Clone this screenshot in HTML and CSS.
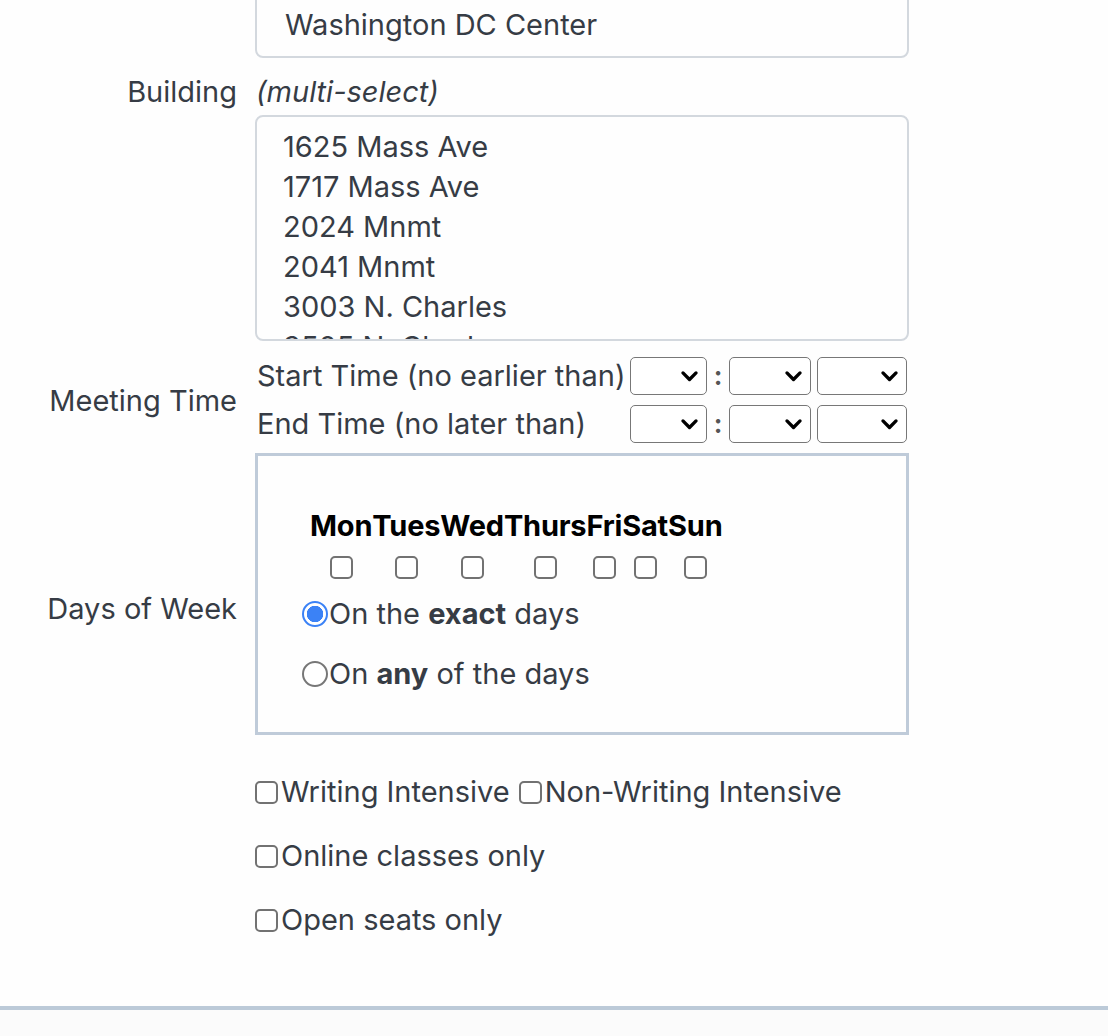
FILE: index.html
```html
<!DOCTYPE html>
<html lang="en">
<head>
<meta charset="utf-8">
<title>Course search filters</title>
<link rel="stylesheet" href="styles.css">
</head>
<body>
<main class="page">
  <form class="form">
    <div class="label"></div>
    <div class="field">
      <div class="select-box">Washington DC Center</div>
    </div>

    <div class="label label-building">Building</div>
    <div class="field">
      <div class="hint">(multi-select)</div>
      <div class="listbox">
        <div class="opt">1625 Mass Ave</div>
        <div class="opt">1717 Mass Ave</div>
        <div class="opt">2024 Mnmt</div>
        <div class="opt">2041 Mnmt</div>
        <div class="opt">3003 N. Charles</div>
        <div class="opt">3505 N. Charles</div>
      </div>
    </div>

    <div class="label label-time">Meeting Time</div>
    <div class="field">
      <div class="time-grid">
        <div class="time-label">Start Time (no earlier than)</div>
        <div class="time-selects">
          <span class="sel sel-h"><select aria-label="start hour"><option></option></select><svg class="chev" viewBox="0 0 16 16"><path d="M2.5 5l5.5 5.5 5.5-5.5" fill="none" stroke="#000" stroke-width="2.8" stroke-linecap="round" stroke-linejoin="round"/></svg></span>
          <span class="colon">:</span>
          <span class="sel sel-m"><select aria-label="start minute"><option></option></select><svg class="chev" viewBox="0 0 16 16"><path d="M2.5 5l5.5 5.5 5.5-5.5" fill="none" stroke="#000" stroke-width="2.8" stroke-linecap="round" stroke-linejoin="round"/></svg></span>
          <span class="sel sel-ap"><select aria-label="start am pm"><option></option></select><svg class="chev" viewBox="0 0 16 16"><path d="M2.5 5l5.5 5.5 5.5-5.5" fill="none" stroke="#000" stroke-width="2.8" stroke-linecap="round" stroke-linejoin="round"/></svg></span>
        </div>
        <div class="time-label">End Time (no later than)</div>
        <div class="time-selects">
          <span class="sel sel-h"><select aria-label="end hour"><option></option></select><svg class="chev" viewBox="0 0 16 16"><path d="M2.5 5l5.5 5.5 5.5-5.5" fill="none" stroke="#000" stroke-width="2.8" stroke-linecap="round" stroke-linejoin="round"/></svg></span>
          <span class="colon">:</span>
          <span class="sel sel-m"><select aria-label="end minute"><option></option></select><svg class="chev" viewBox="0 0 16 16"><path d="M2.5 5l5.5 5.5 5.5-5.5" fill="none" stroke="#000" stroke-width="2.8" stroke-linecap="round" stroke-linejoin="round"/></svg></span>
          <span class="sel sel-ap"><select aria-label="end am pm"><option></option></select><svg class="chev" viewBox="0 0 16 16"><path d="M2.5 5l5.5 5.5 5.5-5.5" fill="none" stroke="#000" stroke-width="2.8" stroke-linecap="round" stroke-linejoin="round"/></svg></span>
        </div>
      </div>
    </div>

    <div class="label label-days">Days of Week</div>
    <div class="field">
      <div class="days-box">
        <table class="days">
          <tr>
            <th>Mon</th><th>Tues</th><th>Wed</th><th>Thurs</th><th>Fri</th><th>Sat</th><th>Sun</th>
          </tr>
          <tr>
            <td><input type="checkbox" class="cb" aria-label="Mon"></td>
            <td><input type="checkbox" class="cb" aria-label="Tues"></td>
            <td><input type="checkbox" class="cb" aria-label="Wed"></td>
            <td><input type="checkbox" class="cb" aria-label="Thurs"></td>
            <td><input type="checkbox" class="cb" aria-label="Fri"></td>
            <td><input type="checkbox" class="cb" aria-label="Sat"></td>
            <td><input type="checkbox" class="cb" aria-label="Sun"></td>
          </tr>
        </table>
        <label class="radio-row first"><input type="radio" name="daymode" class="rb" checked><span>On the <b>exact</b> days</span></label>
        <label class="radio-row"><input type="radio" name="daymode" class="rb"><span>On <b>any</b> of the days</span></label>
      </div>
    </div>

    <div class="label"></div>
    <div class="field options">
      <div class="opt-row">
        <label class="check"><input type="checkbox" class="cb"><span>Writing Intensive</span></label>
        <label class="check"><input type="checkbox" class="cb"><span>Non-Writing Intensive</span></label>
      </div>
      <div class="opt-row">
        <label class="check"><input type="checkbox" class="cb"><span>Online classes only</span></label>
      </div>
      <div class="opt-row">
        <label class="check"><input type="checkbox" class="cb"><span>Open seats only</span></label>
      </div>
    </div>
  </form>
  <div class="footer-bar"></div>
</main>
</body>
</html>
```

FILE: styles.css
```css
* { box-sizing: border-box; }

html, body {
  margin: 0;
  padding: 0;
  background: #fbfbfb;
}

body {
  font-family: Inter, "Liberation Sans", sans-serif;
  font-size: 29px;
  color: #363c45;
  overflow: hidden;
}

.page {
  background: #fefefe;
}

.form {
  display: grid;
  grid-template-columns: 237px 654px;
  column-gap: 18px;
  margin-top: -11px;
  padding-bottom: 68px;
}

.label {
  text-align: right;
  line-height: 36px;
  white-space: nowrap;
}

.label-building {
  padding-top: 16px;
}

.label-time {
  align-self: center;
  padding-top: 18px;
}

.label-days {
  align-self: center;
  padding-top: 40px;
}

.select-box {
  height: 69px;
  border: 2px solid #d3d8de;
  border-radius: 8px;
  padding: 2px 28px 0;
  display: flex;
  align-items: center;
}

.hint {
  font-style: italic;
  line-height: 36px;
  margin-top: 16px;
  padding-left: 1px;
}

.listbox {
  margin-top: 5px;
  height: 226px;
  border: 2px solid #d3d8de;
  border-radius: 8px;
  padding: 10px 26px 0;
  overflow: hidden;
}

.opt {
  line-height: 40px;
  height: 40px;
  white-space: nowrap;
}

.time-grid {
  margin-top: 16px;
  display: grid;
  grid-template-columns: 375px auto;
  row-gap: 10px;
  align-items: center;
}

.time-label {
  padding-left: 2px;
  line-height: 38px;
  white-space: nowrap;
}

.time-selects {
  display: flex;
  align-items: center;
}

.sel {
  position: relative;
  display: block;
  height: 38px;
}

.sel select {
  appearance: none;
  -webkit-appearance: none;
  width: 100%;
  height: 38px;
  border: 1.5px solid #777;
  border-radius: 5px;
  background: #fff;
  margin: 0;
  font: inherit;
}

.sel-h { width: 77px; }
.sel-m { width: 82px; }
.sel-ap { width: 90px; margin-left: 6px; }

.chev {
  position: absolute;
  right: 8px;
  top: 10px;
  width: 19px;
  height: 19px;
  pointer-events: none;
}

.colon {
  width: 22px;
  text-align: center;
  font-size: 26px;
  font-weight: 700;
  line-height: 38px;
  color: #555;
}

.days-box {
  margin-top: 10px;
  height: 282px;
  border: 3px solid #bfcbd9;
  padding: 52px 44px 0 44px;
}

.days {
  border-collapse: collapse;
  margin-left: 8px;
}

.days th {
  font-weight: 700;
  color: #000;
  padding: 0;
  line-height: 36px;
  letter-spacing: -0.2px;
}

.days td {
  padding: 12px 0 0;
  text-align: center;
  line-height: 0;
}

.cb {
  appearance: none;
  -webkit-appearance: none;
  width: 23px;
  height: 23px;
  margin: 0;
  border: 2px solid #727272;
  border-radius: 5px;
  background: #fff;
  vertical-align: middle;
  flex: none;
}

.days .cb {
  display: inline-block;
}

.radio-row {
  display: flex;
  align-items: center;
  line-height: 36px;
  margin-top: 24px;
  white-space: pre;
}

.radio-row.first {
  margin-top: 17px;
}

.rb {
  appearance: none;
  -webkit-appearance: none;
  width: 26px;
  height: 26px;
  margin: 0 1px 0 0;
  border: 2px solid #777;
  border-radius: 50%;
  background: #fff;
  flex: none;
}

.rb:checked {
  border: 2px solid #3b82f6;
  background: radial-gradient(circle, #3b82f6 0 8px, #fff 8.5px);
}

.options {
  padding-top: 39px;
}

.opt-row {
  display: flex;
  gap: 9px;
  line-height: 36px;
  margin-bottom: 28px;
  white-space: nowrap;
}

.opt-row:last-child {
  margin-bottom: 0;
}

.check {
  display: flex;
  align-items: center;
}

.check .cb {
  margin-right: 3px;
}

.footer-bar {
  height: 4px;
  background: #bccad8;
}
```
